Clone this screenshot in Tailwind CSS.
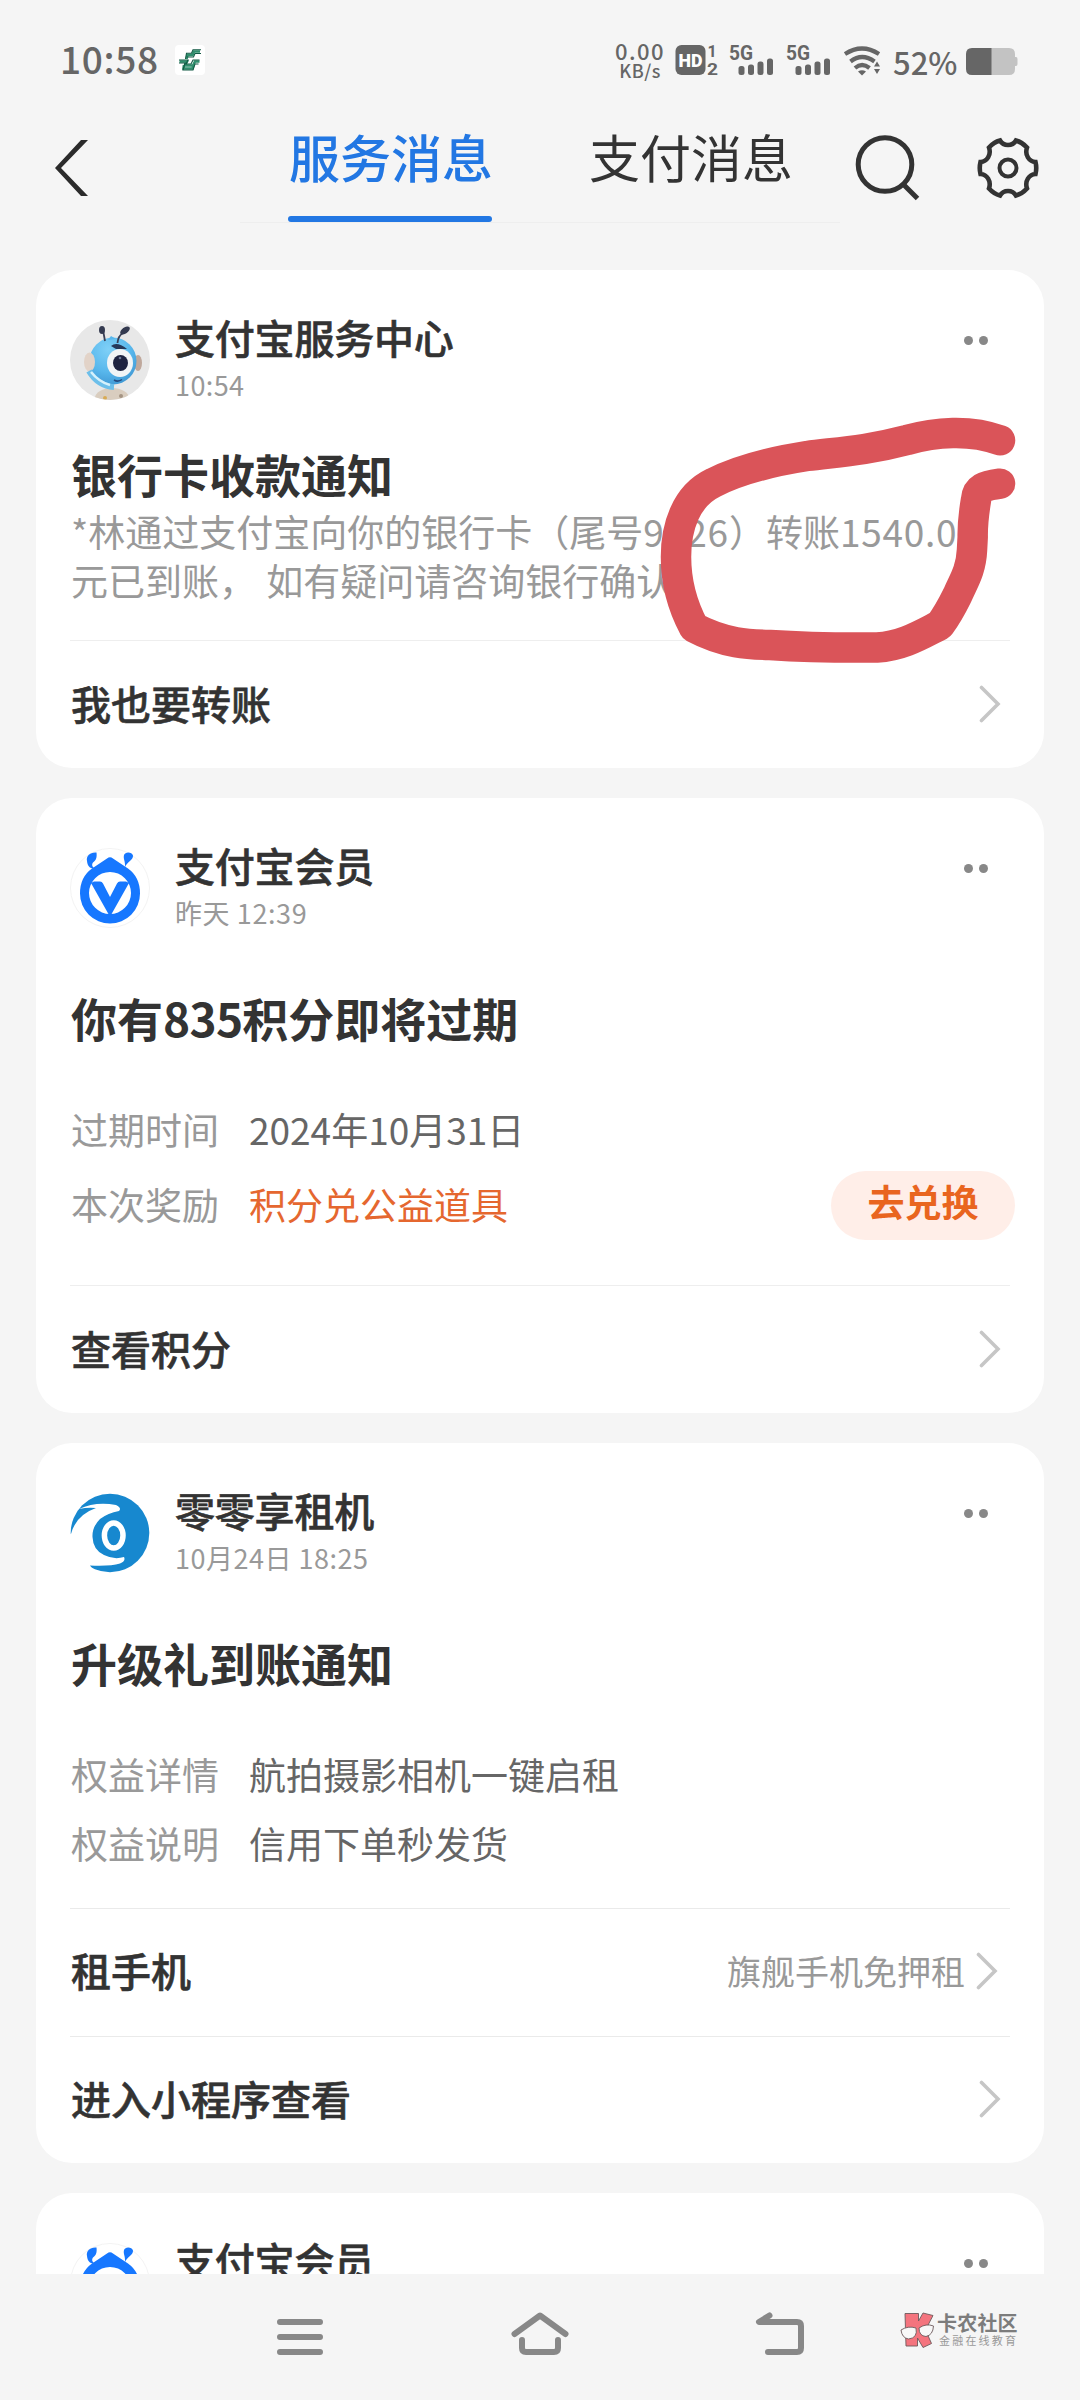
<!DOCTYPE html>
<html lang="zh-CN">
<head>
<meta charset="utf-8">
<title>服务消息</title>
<script src="https://cdn.jsdelivr.net/npm/@tailwindcss/browser@4"></script>
</head>
<body class="bg-[#f5f5f5]">
<svg class="hidden">
  <defs>
    <symbol id="member" viewBox="0 0 80 80">
      <circle cx="40" cy="40" r="39.5" fill="#fff" stroke="#f3f3f3"/>
      <path fill="#1677ff" fill-rule="evenodd" d="M37 10.5Q40 8 43 10.5L58 20.500Q70 29 70 45.500A30 30 0 0 1 10 45.500Q10 29 22 20.500ZM40 24A21 21 0 1 0 40 66A21 21 0 1 0 40 24Z"/>
      <path fill="#1677ff" d="M24 33.500H30Q32 33.500 33 35.500L40 49L47 35.500Q48 33.500 50 33.500H56L59 35L41 67H39L21 35Z"/>
      <path fill="#1677ff" d="M26.500 4.500C20 4 16 8 17 13C17.500 18 20 21 25 20.500C22 19 21.500 16.500 23 14.500C26.500 12 27 9 26.500 4.500ZM54 7C55 3.500 62 3.500 63 7.500C63.500 12 57 14 55 19C55.500 13 53 11 54 7Z"/>
    </symbol>
    <symbol id="next" viewBox="0 0 22 38">
      <path d="M2.500 2.500L19 19L2.500 35.500" fill="none" stroke="#c6c6c6" stroke-width="3.600" stroke-linecap="round" stroke-linejoin="miter"/>
    </symbol>
  </defs>
</svg>
<div class="flex h-[2400px] w-[1080px] flex-col overflow-hidden bg-[#f5f5f5] font-['Noto_Sans_CJK_SC',sans-serif] text-[#333]">

  <!-- status bar -->
  <header class="flex h-[110px] shrink-0 items-start pt-[43px] pl-[60px] text-[#666]">
    <div class="mt-[-3px] h-[36px] w-[115px] text-[37px] leading-[37px] font-medium tracking-[0.700px]">10:58</div>
    <svg class="mt-[2px] h-[30px] w-[30px]" viewBox="0 0 30 30">
      <rect width="30" height="30" rx="4" fill="#fff"/>
      <g fill="none" stroke="#2f8f6d" stroke-width="2.600"><path d="M25 6.500H19L17.500 10H12.500L11.500 14M4.500 16.500H12L10 20.500H18L20 16.500H24.500M9 20L8.500 23.500H17.500L18.500 20"/></g>
      <g fill="none" stroke="#125a44" stroke-width="1.100"><path d="M26 4.700H18L16.500 8.200H11.500L10.500 14M26 8.500H20L18.500 12H12M4 15H13L11 19H16L18 15H24.500M4 18H10L8 25H18L20 19H23.500"/></g>
    </svg>
    <div class="ml-[410px] flex h-[36px] w-[50px] flex-col items-center font-medium">
      <span class="mt-[-4px] text-[22px] leading-[23px] tracking-[1.500px]">0.00</span>
      <span class="text-[18px] leading-[17px] tracking-[0.500px]">KB/s</span>
    </div>
    <svg class="ml-[10px] h-[34px] w-[44px] overflow-visible" viewBox="671 43 44 34">
      <rect x="671.500" y="45" width="30" height="30" rx="6" fill="#666"/>
      <text x="674.500" y="66.500" font-size="18" font-weight="900" fill="#fff" font-family="Roboto" textLength="24" lengthAdjust="spacingAndGlyphs">HD</text>
      <text x="703.500" y="57" font-size="16" font-weight="700" fill="#666" font-family="Roboto">1</text>
      <text x="703" y="75" font-size="16" font-weight="700" fill="#666" font-family="Roboto" textLength="11" lengthAdjust="spacingAndGlyphs">2</text>
    </svg>
    <svg class="ml-[10px] h-[34px] w-[46px] overflow-visible" viewBox="723 43 46 34">
      <text x="723" y="60" font-size="20" font-weight="700" fill="#666" font-family="Roboto" textLength="24" lengthAdjust="spacingAndGlyphs">5G</text>
      <g fill="#666"><rect x="732.500" y="66" width="6" height="9" rx="2.500"/><rect x="742" y="64.500" width="6" height="10.500" rx="2.500"/><rect x="751.500" y="61.500" width="6" height="13.500" rx="2.500"/><rect x="761" y="58.500" width="6" height="16.500" rx="2.500"/></g>
    </svg>
    <svg class="ml-[11px] h-[34px] w-[46px] overflow-visible" viewBox="723 43 46 34">
      <text x="723" y="60" font-size="20" font-weight="700" fill="#666" font-family="Roboto" textLength="24" lengthAdjust="spacingAndGlyphs">5G</text>
      <g fill="#666"><rect x="732.500" y="66" width="6" height="9" rx="2.500"/><rect x="742" y="64.500" width="6" height="10.500" rx="2.500"/><rect x="751.500" y="61.500" width="6" height="13.500" rx="2.500"/><rect x="761" y="58.500" width="6" height="16.500" rx="2.500"/></g>
    </svg>
    <svg class="ml-[11px] h-[34px] w-[38px]" viewBox="833 43 38 34">
      <g fill="none" stroke="#666" stroke-width="4.200"><path d="M835 54Q852 43 869 54"/><path d="M840.500 61.500Q852 52.500 864.500 61.500"/><path d="M845 68Q852 62 859.500 68"/></g>
      <path fill="#666" d="M848 71.500Q852 69 856 71.500L852 75.500ZM864 66.500L867 61.500L870 66.500ZM864 69L867 74L870 69Z"/>
    </svg>
    <div class="ml-[12px] w-[72px] text-[31px] leading-[37px] font-medium">52%</div>
    <svg class="h-[34px] w-[54px]" viewBox="952 43 54 34">
      <path fill="#c3c3c3" d="M978 48H996Q1002 48 1002 54V57H1003Q1004.500 57 1004.500 59V64Q1004.500 66 1003 66H1002V69Q1002 75 996 75H978Z"/>
      <path fill="#666" d="M978.500 48H959Q953 48 953 54V69Q953 75 959 75H978.500Z"/>
    </svg>
  </header>

  <!-- title bar -->
  <nav class="flex h-[160px] shrink-0 items-start">
    <svg class="ml-[50px] mt-[28px] h-[60px] w-[44px]" viewBox="50 138 44 60">
      <path fill="#2b2b2b" d="M81 140H88L61 168L88 196H81L55 168Z"/>
    </svg>
    <div class="ml-[146px] flex h-[113px] w-[600px] border-b border-[#eeeeee] pl-[48px]">
      <div class="h-[112px]">
        <div class="h-[106px] pt-[13px] pl-px text-[51px] leading-[66px] font-medium text-[#2277e3]">服务消息</div>
        <div class="h-[6px] w-[204px] rounded-full bg-[#2277e3]"></div>
      </div>
      <div class="ml-[96px] pt-[13px] text-[51px] leading-[66px] whitespace-nowrap">支付消息</div>
    </div>
    <svg class="ml-[10px] mt-[20px] h-[74px] w-[200px]" viewBox="850 130 200 74" fill="none" stroke="#333" stroke-width="5">
      <circle cx="885" cy="164.500" r="26.800"/>
      <path d="M903.500 184.500L917.500 198.500"/>
      <g transform="translate(1008 168)"><path d="M-8 -27.500C-4.500 -21.500 4.500 -21.500 8 -27.500Q14 -26 19 -20.500C16.500 -13 21 -6.500 27.500 -6Q29 0 27.500 6C21 6.500 16.500 13 19 20.500Q14 26 8 27.500C4.500 21.500 -4.500 21.500 -8 27.500Q-14 26 -19 20.500C-16.500 13 -21 6.500 -27.500 6Q-29 0 -27.500 -6C-21 -6.500 -16.500 -13 -19 -20.500Q-14 -26 -8 -27.500Z" stroke-width="4.600"/><circle r="8.500" stroke-width="4"/></g>
    </svg>
  </nav>

  <!-- message list -->
  <main class="flex h-[2004px] shrink-0 flex-col gap-[30px] overflow-hidden px-[36px]">
    <section class="relative h-[498px] shrink-0 rounded-[36px] bg-white px-[34px] pt-[42px]">
      <div class="flex h-[88px] items-start">
        <svg class="mt-[8px] h-[80px] w-[80px]" viewBox="0 0 80 80">
          <clipPath id="round"><circle cx="40" cy="40" r="40"/></clipPath>
          <radialGradient id="head" cx=".4" cy=".25" r=".8"><stop offset="0" stop-color="#7fd0f7"/><stop offset=".6" stop-color="#58b7ec"/><stop offset="1" stop-color="#3f97d3"/></radialGradient>
          <g clip-path="url(#round)">
            <rect width="80" height="80" fill="#e8e8e8"/>
            <ellipse cx="42" cy="78" rx="17" ry="10" fill="#d9cdbf"/>
            <circle cx="35" cy="78" r="2" fill="#d8aa55"/><circle cx="51" cy="76" r="2" fill="#a59484"/>
            <ellipse cx="68" cy="43" rx="4" ry="8" fill="#bfa89c"/>
            <circle cx="43" cy="41" r="23.500" fill="url(#head)"/>
            <path d="M38 20L41 16L46 19Z" fill="#58b7ec"/>
            <ellipse cx="19.500" cy="42" rx="5.500" ry="9.500" fill="#e2d3c8"/>
            <path d="M19 51Q28 66 44 67" fill="none" stroke="#6dbfea" stroke-width="6"/>
            <path d="M21 52Q29 62 40 65" fill="none" stroke="#d5f1fc" stroke-width="2.500"/>
            <path d="M41 26Q47 21 57 29L46 29Z" fill="#26395a"/>
            <ellipse cx="50" cy="43" rx="13" ry="14" fill="#f1f4f6"/>
            <ellipse cx="50.500" cy="43" rx="7.500" ry="8" fill="#1d2341"/><circle cx="50" cy="38" r="1.300" fill="#6b7796"/>
            <path d="M44 60Q48 62.500 52 59.500" fill="none" stroke="#244b80" stroke-width="1.500"/>
            <g stroke="#3b4157" stroke-width="1.800" fill="none"><path d="M33 10L35 21M53 13Q48 16 47.500 23"/></g>
            <ellipse cx="32" cy="10" rx="3" ry="4" fill="#343a50"/><ellipse cx="55" cy="10.500" rx="5.500" ry="3" transform="rotate(-35 55 10.500)" fill="#343a50"/>
          </g>
        </svg>
        <div class="ml-[25px] flex-1">
          <div class="text-[40px] leading-[51px] font-medium tracking-[-0.200px] [-webkit-text-stroke:0.6px]">支付宝服务中心</div>
          <div class="mt-[4px] text-[27px] leading-[36px] tracking-[0.400px] text-[#999]">10:54</div>
        </div>
        <div class="mt-[24px] mr-[22px] flex gap-[6px]"><i class="size-[9px] rounded-full bg-[#888]"></i><i class="size-[9px] rounded-full bg-[#888]"></i></div>
      </div>
      <h2 class="mt-[43px] pl-px text-[46px] leading-[60px] font-bold">银行卡收款通知</h2>
      <p class="mt-[4px] pl-px text-[37px] leading-[49px] whitespace-nowrap text-[#999] [word-spacing:2px]">*林通过支付宝向你的银行卡（尾号<span class="tracking-[0.900px]">9526</span>）转账<span class="tracking-[0.700px]">1540.00</span><br>元已到账， 如有疑问请咨询银行确认</p>
      <div class="mt-[35px] flex h-[128px] items-center justify-between border-t border-[#eee] pr-[9px] pb-[4px]">
        <span class="pl-px text-[40px] font-medium [-webkit-text-stroke:0.6px]">我也要转账</span>
        <svg class="mt-[2px] h-[38px] w-[22px]"><use href="#next"/></svg>
      </div>
      <svg class="absolute top-[140px] left-[614px] h-[260px] w-[380px]" viewBox="650 410 380 260">
        <path fill="none" stroke="#da5459" stroke-width="30.500" stroke-linecap="round" stroke-linejoin="round" d="M1000 440.300C970 429 935 432 907 440C865 451 838 452 807 456C775 461 742 468 713 483C686 496 676 527 676 557C676 585 683 607 694 627.500C725 644 750 644.500 770 645C800 647 840 647.800 877 647.500C903 646 922 634 940 625C950 611 954 602 958 594C963 582 971 571 972 550L972.700 537C972.500 525 974 512 976 500C977 488 984 486 1000 483.700"/>
      </svg>
    </section>

    <section class="h-[615px] shrink-0 rounded-[36px] bg-white px-[34px] pt-[42px]">
      <div class="flex h-[88px] items-start">
        <svg class="mt-[8px] h-[80px] w-[80px]"><use href="#member"/></svg>
        <div class="ml-[25px] flex-1">
          <div class="text-[40px] leading-[51px] font-medium tracking-[-0.200px] [-webkit-text-stroke:0.6px]">支付宝会员</div>
          <div class="mt-[4px] text-[27px] leading-[36px] tracking-[0.600px] text-[#999]">昨天 12:39</div>
        </div>
        <div class="mt-[24px] mr-[22px] flex gap-[6px]"><i class="size-[9px] rounded-full bg-[#888]"></i><i class="size-[9px] rounded-full bg-[#888]"></i></div>
      </div>
      <h2 class="mt-[59px] pl-px text-[46px] leading-[60px] font-bold">你有<span class="tracking-[-0.700px]">835</span>积分即将过期</h2>
      <div class="mt-[57px] flex text-[37px] leading-[50px]">
        <span class="w-[179px] pl-px text-[#999]">过期时间</span>
        <span class="text-[#666]">2024年10月31日</span>
      </div>
      <div class="mt-[17px] -mr-[5px] flex h-[69px] items-center text-[37px] leading-[50px]">
        <span class="w-[179px] pb-[3px] pl-px text-[#999]">本次奖励</span>
        <span class="flex-1 pb-[3px] text-[#e5672f]">积分兑公益道具</span>
        <span class="h-[69px] w-[184px] rounded-full bg-[#ffeee8] pt-[5px] text-center font-bold text-[#e9651f]">去兑换</span>
      </div>
      <div class="mt-[45px] flex h-[128px] items-center justify-between border-t border-[#eee] pr-[9px] pb-[4px]">
        <span class="pl-px text-[40px] font-medium [-webkit-text-stroke:0.6px]">查看积分</span>
        <svg class="mt-[2px] h-[38px] w-[22px]"><use href="#next"/></svg>
      </div>
    </section>

    <section class="h-[720px] shrink-0 rounded-[36px] bg-white px-[34px] pt-[42px]">
      <div class="flex h-[88px] items-start">
        <svg class="mt-[8px] h-[80px] w-[80px]" viewBox="0 0 80 80">
          <circle cx="40" cy="40" r="39.300" fill="#1788cf"/>
          <path fill="#fff" d="M9 16Q26 8 46 12Q52 15 49 18Q38 20 30 26Q22 34 22.500 44Q23 57 34 62Q44 67 54 64Q56 68 50 70.500Q40 73.500 20 72.500L24 78L-2 78L-2 42L1 41Q6 22 26 15Q18 14 9 16Z"/>
          <ellipse cx="43.700" cy="42.500" rx="9.300" ry="12.500" fill="#1788cf" stroke="#fff" stroke-width="5.500"/>
        </svg>
        <div class="ml-[25px] flex-1">
          <div class="text-[40px] leading-[51px] font-medium tracking-[-0.200px] [-webkit-text-stroke:0.6px]">零零享租机</div>
          <div class="mt-[4px] text-[27px] leading-[36px] tracking-[0.500px] text-[#999]">10月24日 18:25</div>
        </div>
        <div class="mt-[24px] mr-[22px] flex gap-[6px]"><i class="size-[9px] rounded-full bg-[#888]"></i><i class="size-[9px] rounded-full bg-[#888]"></i></div>
      </div>
      <h2 class="mt-[59px] pl-px text-[46px] leading-[60px] font-bold">升级礼到账通知</h2>
      <div class="mt-[57px] flex text-[37px] leading-[50px]">
        <span class="w-[179px] pl-px text-[#999]">权益详情</span>
        <span class="text-[#666]">航拍摄影相机一键启租</span>
      </div>
      <div class="mt-[19px] flex text-[37px] leading-[50px]">
        <span class="w-[179px] pl-px text-[#999]">权益说明</span>
        <span class="text-[#666]">信用下单秒发货</span>
      </div>
      <div class="mt-[40px] flex h-[128px] items-center border-t border-[#eaeaea] pr-[12px] pb-[5px]">
        <span class="flex-1 pl-px text-[40px] font-medium [-webkit-text-stroke:0.6px]">租手机</span>
        <span class="text-[34px] text-[#999]">旗舰手机免押租</span>
        <svg class="mt-[2px] ml-[11px] h-[38px] w-[22px]"><use href="#next"/></svg>
      </div>
      <div class="flex h-[127px] items-center justify-between border-t border-[#eaeaea] pr-[9px] pb-[4px]">
        <span class="pl-px text-[40px] font-medium [-webkit-text-stroke:0.6px]">进入小程序查看</span>
        <svg class="mt-[2px] h-[38px] w-[22px]"><use href="#next"/></svg>
      </div>
    </section>

    <section class="h-[615px] shrink-0 rounded-[36px] bg-white px-[34px] pt-[42px]">
      <div class="flex h-[88px] items-start">
        <svg class="mt-[8px] h-[80px] w-[80px]"><use href="#member"/></svg>
        <div class="ml-[25px] flex-1">
          <div class="text-[40px] leading-[51px] font-medium tracking-[-0.200px] [-webkit-text-stroke:0.6px]">支付宝会员</div>
        </div>
        <div class="mt-[24px] mr-[22px] flex gap-[6px]"><i class="size-[9px] rounded-full bg-[#888]"></i><i class="size-[9px] rounded-full bg-[#888]"></i></div>
      </div>
    </section>
  </main>

  <!-- system navigation -->
  <footer class="flex h-[126px] shrink-0 items-start pt-[36px] pl-[270px]">
    <svg class="h-[50px] w-[60px]" viewBox="270 2310 60 50" fill="none" stroke="#888" stroke-width="6" stroke-linecap="round"><path d="M280 2322H320M280 2337H320M280 2352H320"/></svg>
    <svg class="ml-[180px] h-[50px] w-[60px]" viewBox="510 2310 60 50" fill="none" stroke="#888" stroke-width="6" stroke-linecap="round" stroke-linejoin="round"><path d="M514.500 2334L540 2315.500L565.500 2334M522 2340V2348Q522 2352 526 2352H554Q558 2352 558 2348V2340"/></svg>
    <svg class="ml-[180px] h-[50px] w-[60px]" viewBox="750 2310 60 50" fill="none" stroke="#888" stroke-width="6" stroke-linecap="round" stroke-linejoin="round"><path d="M769.500 2315.500L759 2322H797Q801 2322 801 2326V2348Q801 2352 797 2352H768"/></svg>
    <svg class="ml-[89px] mt-[2px] h-[38px] w-[37px]" viewBox="899 2312 37 38" stroke="#6d5a5c" stroke-width=".9">
      <path fill="#f4747e" d="M905 2313.500H918.500V2321L923 2313L933 2315.500L925.500 2330L931.500 2343.500L923 2347.500L917.500 2338V2346H906Z"/>
      <path fill="#f8f8f8" d="M901 2330Q908 2325.500 916 2328Q918 2338 908.500 2339Q902 2338 901 2330ZM919 2328Q926 2323 933.500 2326Q933 2335 926 2336.500Q919 2336 919 2328Z"/>
    </svg>
    <div class="ml-px whitespace-nowrap">
      <div class="mt-[1px] text-[20px] leading-[24px] font-bold tracking-[0.200px] text-[#7c7c7c]">卡农社区</div>
      <div class="mt-[-2px] pl-[2px] text-[11px] leading-[14px] tracking-[2.200px] text-[#999]">金融在线教育</div>
    </div>
  </footer>
</div>
</body>
</html>
